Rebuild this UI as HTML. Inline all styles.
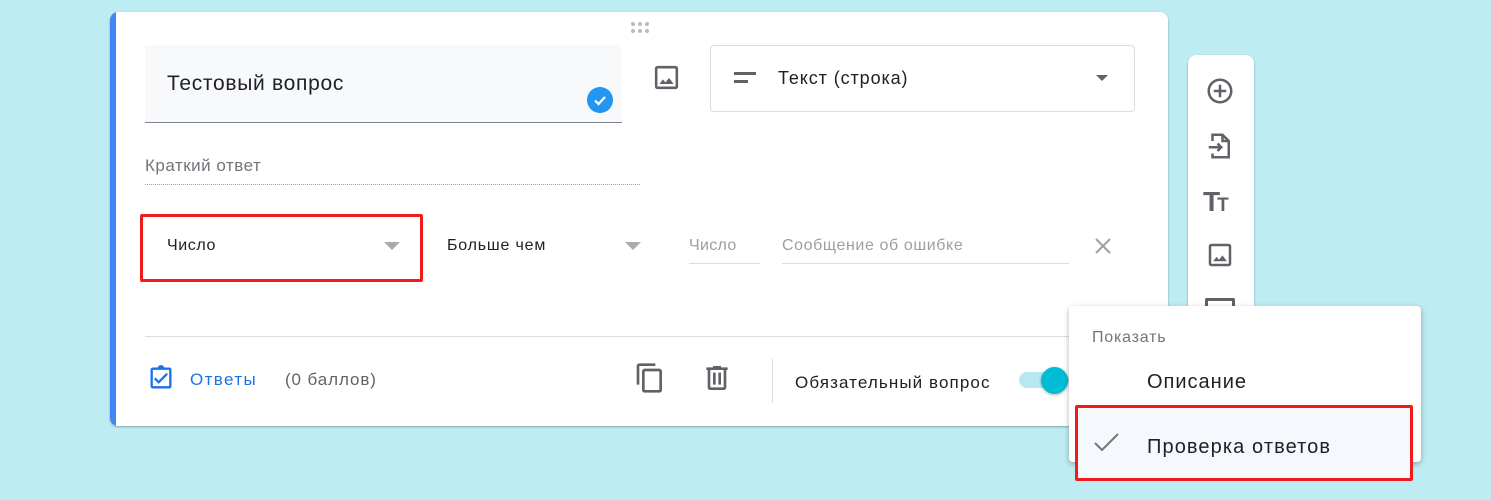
<!DOCTYPE html>
<html><head><meta charset="utf-8"><style>
*{box-sizing:border-box;margin:0;padding:0}
body{width:1491px;height:500px;background:#bdecf2;position:relative;overflow:hidden;font-family:"Liberation Sans","Noto Sans CJK SC",sans-serif;color:#202124}
.a{position:absolute;white-space:nowrap}
</style></head><body>
<div class="a" style="left:110px;top:12px;width:1058px;height:414px;background:#fff;border-radius:8px;box-shadow:0 1px 2px rgba(0,0,0,.3);overflow:hidden">
<div class="a" style="left:0;top:0;width:6px;height:414px;background:#4285f4"></div>
</div>
<svg class="a" style="left:629px;top:21px" width="24" height="14"><g fill="#bbb"><circle cx="4" cy="3" r="2"/><circle cx="11" cy="3" r="2"/><circle cx="18" cy="3" r="2"/><circle cx="4" cy="10" r="2"/><circle cx="11" cy="10" r="2"/><circle cx="18" cy="10" r="2"/></g></svg>
<div class="a" style="left:145px;top:45px;width:477px;height:78px;background:#f8f9fa;border-bottom:1px solid #80868b"></div>
<div class="a" style="left:167px;top:72px;font-size:21px;letter-spacing:0.7px">Тестовый вопрос</div>
<svg class="a" style="left:586px;top:86px" width="28" height="28"><circle cx="14" cy="14" r="13" fill="#2196f3"/><path d="M9 14.5l3.5 3.5 6.5-7" stroke="#fff" stroke-width="2.2" fill="none"/></svg>
<svg class="a" style="left:651px;top:62px" width="31" height="31" viewBox="0 0 24 24"><path fill="#5f6368" d="M19 3H5a2 2 0 0 0-2 2v14a2 2 0 0 0 2 2h14a2 2 0 0 0 2-2V5a2 2 0 0 0-2-2zm0 16H5V5h14v14zm-5.04-6.71l-2.75 3.54-1.96-2.36L6.5 17h11l-3.54-4.71z"/></svg>
<div class="a" style="left:710px;top:45px;width:425px;height:67px;border:1px solid #dadce0;border-radius:4px"></div>
<div class="a" style="left:734px;top:72px;width:22px;height:3px;background:#5f6368"></div>
<div class="a" style="left:734px;top:80px;width:14px;height:3px;background:#5f6368"></div>
<div class="a" style="left:778px;top:68px;font-size:18px;letter-spacing:0.9px">Текст (строка)</div>
<div class="a" style="left:1096px;top:75px;border-left:6px solid transparent;border-right:6px solid transparent;border-top:6px solid #5f6368"></div>
<div class="a" style="left:145px;top:156px;font-size:17px;letter-spacing:0.5px;color:#70757a">Краткий ответ</div>
<div class="a" style="left:145px;top:184px;width:495px;border-top:1px dotted #9aa0a6"></div>
<div class="a" style="left:140px;top:214px;width:283px;height:68px;border:3px solid #f01c1c;border-radius:2px"></div>
<div class="a" style="left:167px;top:237px;font-size:16px;letter-spacing:0.6px">Число</div>
<div class="a" style="left:384px;top:242px;border-left:8px solid transparent;border-right:8px solid transparent;border-top:8px solid #aaa"></div>
<div class="a" style="left:447px;top:237px;font-size:16px;letter-spacing:0.8px">Больше чем</div>
<div class="a" style="left:625px;top:242px;border-left:8px solid transparent;border-right:8px solid transparent;border-top:8px solid #aaa"></div>
<div class="a" style="left:689px;top:237px;font-size:16px;letter-spacing:0.3px;color:#9aa0a6">Число</div>
<div class="a" style="left:689px;top:263px;width:71px;border-top:1px solid #dadce0"></div>
<div class="a" style="left:782px;top:237px;font-size:16px;letter-spacing:0.6px;color:#9aa0a6">Сообщение об ошибке</div>
<div class="a" style="left:782px;top:263px;width:287px;border-top:1px solid #dadce0"></div>
<svg class="a" style="left:1093px;top:236px" width="20" height="20"><path d="M3 3l14 14M17 3L3 17" stroke="#9aa0a6" stroke-width="2"/></svg>
<div class="a" style="left:145px;top:336px;width:1023px;border-top:1px solid #dadce0"></div>
<svg class="a" style="left:147px;top:364px" width="28" height="28" viewBox="0 0 24 24"><path fill="#1a73e8" d="M19 3h-4.18C14.4 1.84 13.3 1 12 1s-2.4.84-2.82 2H5a2 2 0 0 0-2 2v14a2 2 0 0 0 2 2h14a2 2 0 0 0 2-2V5a2 2 0 0 0-2-2zm0 16H5V5h14v14zM10 17l-4-4 1.4-1.4 2.6 2.6 6.6-6.6L18 9z"/></svg>
<div class="a" style="left:190px;top:370px;font-size:17px;letter-spacing:1.4px;color:#1a73e8">Ответы</div>
<div class="a" style="left:285px;top:370px;font-size:17px;letter-spacing:0.9px;color:#5f6368">(0 баллов)</div>
<svg class="a" style="left:634px;top:362px" width="32" height="32" viewBox="0 0 24 24"><path fill="#5f6368" d="M16 1H4a2 2 0 0 0-2 2v14h2V3h12V1zm3 4H8a2 2 0 0 0-2 2v14a2 2 0 0 0 2 2h11a2 2 0 0 0 2-2V7a2 2 0 0 0-2-2zm0 16H8V7h11v14z"/></svg>
<svg class="a" style="left:701px;top:362px" width="32" height="32" viewBox="0 0 24 24"><path fill="#5f6368" d="M15 4V3H9v1H4v2h1v13a2 2 0 0 0 2 2h10a2 2 0 0 0 2-2V6h1V4h-5zm2 15H7V6h10v13zM9 8h2v9H9zm4 0h2v9h-2z"/></svg>
<div class="a" style="left:772px;top:359px;height:44px;border-left:1px solid #dadce0"></div>
<div class="a" style="left:795px;top:373px;font-size:17px;letter-spacing:1.1px">Обязательный вопрос</div>
<div class="a" style="left:1019px;top:372px;width:50px;height:16px;border-radius:8px;background:#b8e8ef"></div>
<div class="a" style="left:1041px;top:367px;width:27px;height:27px;border-radius:50%;background:#00bcd4;box-shadow:0 1px 3px rgba(0,0,0,.3)"></div>
<div class="a" style="left:1188px;top:55px;width:66px;height:270px;background:#fff;border-radius:8px;box-shadow:0 1px 2px rgba(0,0,0,.3)"></div>
<svg class="a" style="left:1205px;top:76px" width="30" height="30" viewBox="0 0 24 24"><path fill="#5f6368" d="M13 7h-2v4H7v2h4v4h2v-4h4v-2h-4V7zm-1-5C6.48 2 2 6.48 2 12s4.48 10 10 10 10-4.48 10-10S17.52 2 12 2zm0 18c-4.41 0-8-3.59-8-8s3.59-8 8-8 8 3.59 8 8-3.59 8-8 8z"/></svg>
<svg class="a" style="left:1205px;top:131px" width="30" height="30" viewBox="0 0 24 24"><path fill="none" stroke="#5f6368" stroke-width="2" d="M6 8V3h8l5 5v13H6v-3M3 13h10M10 10l3 3-3 3M14 3v5h5"/></svg>
<div class="a" style="left:1203px;top:186px;font-size:28px;font-weight:bold;color:#5f6368;letter-spacing:-3px">T<span style="font-size:19px">T</span></div>
<svg class="a" style="left:1205px;top:240px" width="30" height="30" viewBox="0 0 24 24"><path fill="#5f6368" d="M19 3H5a2 2 0 0 0-2 2v14a2 2 0 0 0 2 2h14a2 2 0 0 0 2-2V5a2 2 0 0 0-2-2zm0 16H5V5h14v14zm-5.04-6.71l-2.75 3.54-1.96-2.36L6.5 17h11l-3.54-4.71z"/></svg>
<div class="a" style="left:1205px;top:298px;width:30px;height:10px;border:3px solid #5f6368;border-bottom:none;border-radius:2px 2px 0 0"></div>
<div class="a" style="left:1069px;top:306px;width:352px;height:156px;background:#fff;border-radius:4px;box-shadow:0 2px 6px rgba(0,0,0,.3)"></div>
<div class="a" style="left:1092px;top:329px;font-size:16px;letter-spacing:0.8px;color:#757575">Показать</div>
<div class="a" style="left:1147px;top:371px;font-size:20px;letter-spacing:1px">Описание</div>
<div class="a" style="left:1075px;top:405px;width:338px;height:76px;background:#f5f8fd;border:3px solid #f01c1c;border-radius:2px"></div>
<svg class="a" style="left:1093px;top:432px" width="28" height="22"><path d="M2 11l7 7L25 2" stroke="#757575" stroke-width="2" fill="none"/></svg>
<div class="a" style="left:1147px;top:436px;font-size:20px;letter-spacing:1.1px">Проверка ответов</div>
</body></html>
